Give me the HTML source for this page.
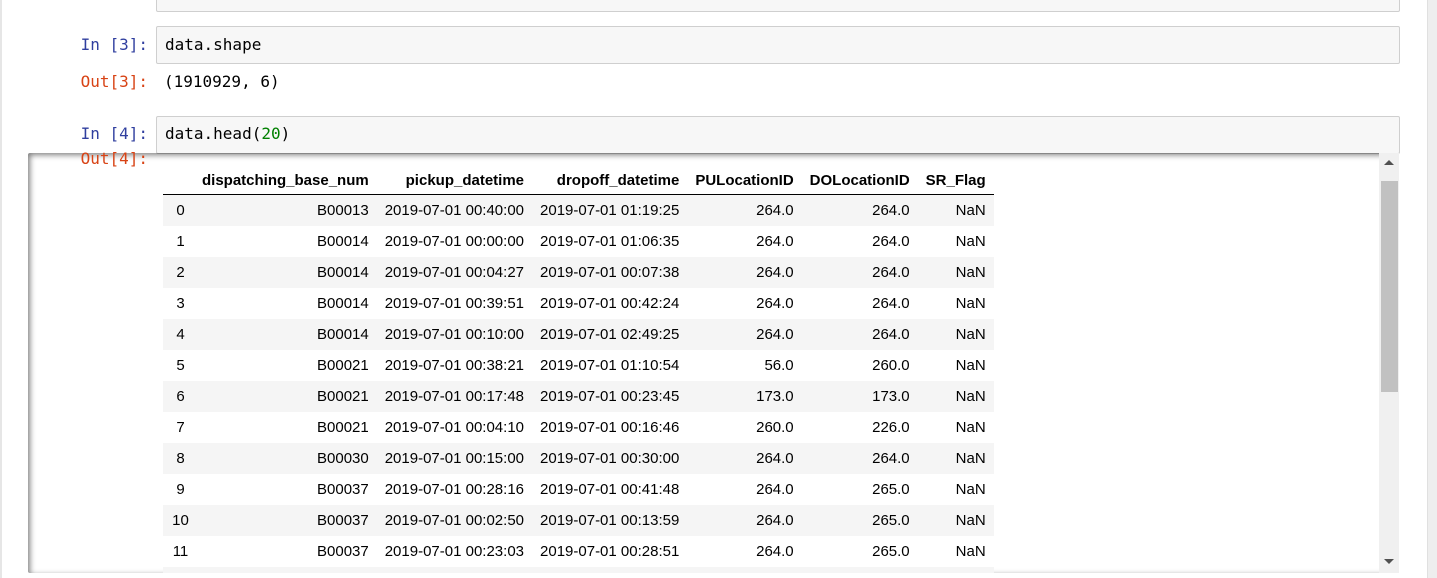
<!DOCTYPE html>
<html><head><style>
body{margin:0;width:1437px;height:578px;overflow:hidden;background:#fff;position:relative;font-family:"Liberation Sans",Arial,sans-serif}
.lstrip{position:absolute;left:0;top:0;width:2px;height:578px;background:#e6e6e6}
.rstrip{position:absolute;left:1427px;top:0;width:10px;height:578px;background:#eee;border-left:1px solid #e0e0e0}
.box{position:absolute;left:156px;width:1242px;background:#f7f7f7;border:1px solid #cfcfcf;border-radius:2px}
.code{position:absolute;font-family:"DejaVu Sans Mono","Liberation Mono",monospace;font-size:16px;line-height:18px;white-space:pre;color:#000}
.pin{color:#303f9f;text-align:right;width:148px;left:0px}
.pout{color:#d84315;text-align:right;width:148px;left:0px}
.out{position:absolute;left:28px;top:153px;width:1371px;height:420px;overflow:hidden;box-shadow:inset 2px 2px 6px rgba(0,0,0,.5);border-radius:2px}
table{position:absolute;left:135px;top:13px;border-collapse:collapse;font-size:15px;color:#000}
th{font-weight:bold;text-align:right;padding:0 8px;height:28px;border-bottom:1px solid #000}
td{text-align:right;padding:0 8px;height:31px}
td:first-child{text-align:center;padding:0 0 0 4px}
tbody tr:nth-child(odd){background:#f5f5f5}
.sb{position:absolute;left:1379px;top:153px;width:20px;height:420px;background:#f0f0f0}
.thumb{position:absolute;left:2px;top:28px;width:17px;height:211px;background:#c1c1c1}
</style></head><body>
<div class="lstrip"></div><div class="rstrip"></div>
<div class="box" style="top:-5px;height:15px"></div>
<div class="box" style="top:26px;height:36px"></div>
<div class="code pin" style="top:36px">In [3]:</div>
<div class="code" style="left:165px;top:36px">data.shape</div>
<div class="code pout" style="top:73px">Out[3]:</div>
<div class="code" style="left:164px;top:73px">(1910929, 6)</div>
<div class="box" style="top:116px;height:36px"></div>
<div class="code pin" style="top:125px">In [4]:</div>
<div class="code" style="left:165px;top:125px">data.head(<span style="color:#008000">20</span>)</div>
<div class="out">
<table>
<thead><tr><th style="width:31px;padding:0"></th><th>dispatching_base_num</th><th>pickup_datetime</th><th>dropoff_datetime</th><th>PULocationID</th><th>DOLocationID</th><th>SR_Flag</th></tr></thead>
<tbody>
<tr><td>0</td><td>B00013</td><td>2019-07-01 00:40:00</td><td>2019-07-01 01:19:25</td><td>264.0</td><td>264.0</td><td>NaN</td></tr>
<tr><td>1</td><td>B00014</td><td>2019-07-01 00:00:00</td><td>2019-07-01 01:06:35</td><td>264.0</td><td>264.0</td><td>NaN</td></tr>
<tr><td>2</td><td>B00014</td><td>2019-07-01 00:04:27</td><td>2019-07-01 00:07:38</td><td>264.0</td><td>264.0</td><td>NaN</td></tr>
<tr><td>3</td><td>B00014</td><td>2019-07-01 00:39:51</td><td>2019-07-01 00:42:24</td><td>264.0</td><td>264.0</td><td>NaN</td></tr>
<tr><td>4</td><td>B00014</td><td>2019-07-01 00:10:00</td><td>2019-07-01 02:49:25</td><td>264.0</td><td>264.0</td><td>NaN</td></tr>
<tr><td>5</td><td>B00021</td><td>2019-07-01 00:38:21</td><td>2019-07-01 01:10:54</td><td>56.0</td><td>260.0</td><td>NaN</td></tr>
<tr><td>6</td><td>B00021</td><td>2019-07-01 00:17:48</td><td>2019-07-01 00:23:45</td><td>173.0</td><td>173.0</td><td>NaN</td></tr>
<tr><td>7</td><td>B00021</td><td>2019-07-01 00:04:10</td><td>2019-07-01 00:16:46</td><td>260.0</td><td>226.0</td><td>NaN</td></tr>
<tr><td>8</td><td>B00030</td><td>2019-07-01 00:15:00</td><td>2019-07-01 00:30:00</td><td>264.0</td><td>264.0</td><td>NaN</td></tr>
<tr><td>9</td><td>B00037</td><td>2019-07-01 00:28:16</td><td>2019-07-01 00:41:48</td><td>264.0</td><td>265.0</td><td>NaN</td></tr>
<tr><td>10</td><td>B00037</td><td>2019-07-01 00:02:50</td><td>2019-07-01 00:13:59</td><td>264.0</td><td>265.0</td><td>NaN</td></tr>
<tr><td>11</td><td>B00037</td><td>2019-07-01 00:23:03</td><td>2019-07-01 00:28:51</td><td>264.0</td><td>265.0</td><td>NaN</td></tr>
<tr><td>12</td><td>B00037</td><td>2019-07-01 00:23:03</td><td>2019-07-01 00:28:51</td><td>264.0</td><td>265.0</td><td>NaN</td></tr>
</tbody></table>
</div>
<div class="code pout" style="top:150px">Out[4]:</div>
<div class="sb"><div class="thumb"></div>
<div style="position:absolute;left:5px;top:7px;width:0;height:0;border-left:5px solid transparent;border-right:5px solid transparent;border-bottom:5px solid #505050"></div>
<div style="position:absolute;left:5px;top:406px;width:0;height:0;border-left:5px solid transparent;border-right:5px solid transparent;border-top:5px solid #505050"></div>
</div>
</body></html>
